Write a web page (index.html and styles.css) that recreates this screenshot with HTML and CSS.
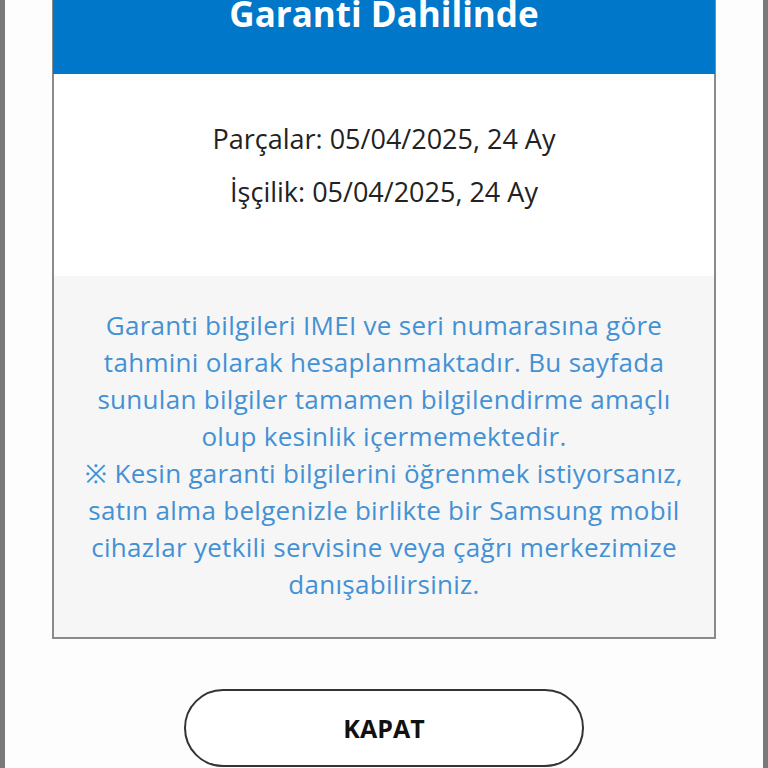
FILE: index.html
```html
<!DOCTYPE html>
<html lang="tr">
<head>
    <meta charset="UTF-8">
    <meta name="viewport" content="width=device-width, initial-scale=1.0">
    <title>Garanti Bilgisi</title>
    <link rel="stylesheet" href="styles.css">
</head>
<body>

    <div class="page">
        <div class="card">
            <div class="header">
                <h1>Garanti Dahilinde</h1>
            </div>
            <div class="dates">
                <p>Parçalar: 05/04/2025, 24 Ay</p>
                <p>İşçilik: 05/04/2025, 24 Ay</p>
            </div>
            <div class="info">
                Garanti bilgileri IMEI ve seri numarasına göre<br>
                tahmini olarak hesaplanmaktadır. Bu sayfada<br>
                sunulan bilgiler tamamen bilgilendirme amaçlı<br>
                olup kesinlik içermemektedir.<br>
                ※ Kesin garanti bilgilerini öğrenmek istiyorsanız,<br>
                satın alma belgenizle birlikte bir Samsung mobil<br>
                cihazlar yetkili servisine veya çağrı merkezimize<br>
                danışabilirsiniz.
            </div>
        </div>

        <button class="close-button">KAPAT</button>
    </div>

</body>
</html>
```

FILE: styles.css
```css
body {
    font-family: "Open Sans", sans-serif;
    background-color: #ffffff;
    margin: 0;
}
.page {
    border-left: 5px solid #7a7a7a;
    border-right: 5px solid #7a7a7a;
    min-height: 768px;
    box-sizing: border-box;
    display: flex;
    flex-direction: column;
    align-items: center;
    background-color: #fdfdfd;
}
.card {
    width: 664px;
    box-sizing: border-box;
    border: 2px solid #8a8a8a;
    border-top: none;
    background-color: white;
}
.header {
    background-color: #0077c8;
    height: 74px;
    margin: 0 -1px;
    overflow: hidden;
    text-align: center;
}
.header h1 {
    color: white;
    font-size: 35px;
    font-weight: 700;
    line-height: 1;
    margin: -4px 0 0;
}
.dates {
    height: 202px;
    box-sizing: border-box;
    padding-top: 38px;
    text-align: center;
}
.dates p {
    margin: 0;
    font-size: 27px;
    line-height: 53px;
    color: #222222;
}
.info {
    background-color: #f6f6f6;
    color: #4391d5;
    font-size: 26px;
    letter-spacing: 0.3px;
    line-height: 37px;
    text-align: center;
    padding: 31px 0 34px;
    white-space: nowrap;
}
.close-button {
    margin-top: 50px;
    width: 400px;
    height: 78px;
    border: 2px solid #333333;
    border-radius: 39px;
    background-color: white;
    font-family: "Open Sans", sans-serif;
    font-size: 25px;
    font-weight: 700;
    color: #111111;
}
```
